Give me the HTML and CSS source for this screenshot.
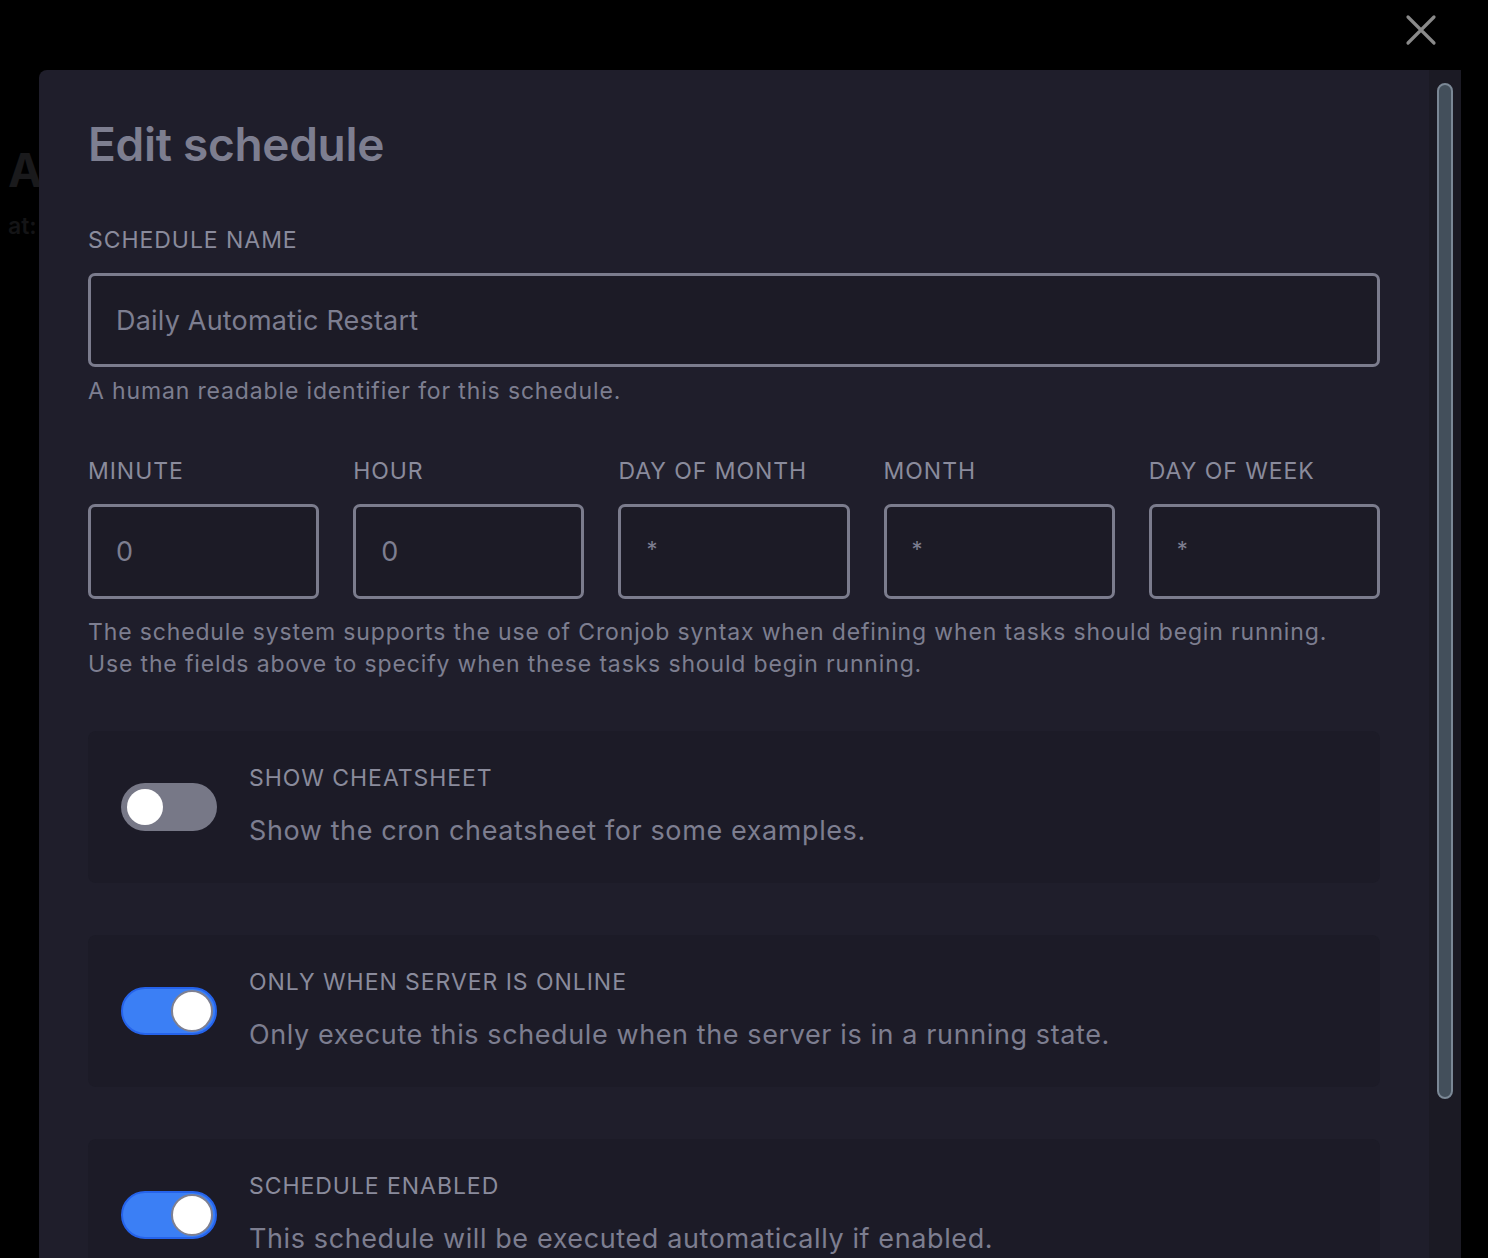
FILE: index.html
```html
<!DOCTYPE html>
<html>
<head>
<meta charset="utf-8">
<link rel="stylesheet" href="styles.css">
</head>
<body>
<div class="page">
  <div class="page-title">A</div>
  <div class="page-sub">at:</div>
</div>

<button class="close" aria-label="Close">
  <svg width="32" height="32" viewBox="0 0 32 32"><path d="M3 3 L29 29 M29 3 L3 29" stroke="#8a8a8a" stroke-width="3.2" stroke-linecap="round"/></svg>
</button>

<div class="modal">
  <div class="modal-body">
    <h1 class="title">Edit schedule</h1>

    <label class="label">Schedule name</label>
    <div class="input wide">Daily Automatic Restart</div>
    <p class="help">A human readable identifier for this schedule.</p>

    <div class="cron">
      <div class="cron-field"><label class="label">Minute</label><div class="input">0</div></div>
      <div class="cron-field"><label class="label">Hour</label><div class="input">0</div></div>
      <div class="cron-field"><label class="label">Day of month</label><div class="input star">*</div></div>
      <div class="cron-field"><label class="label">Month</label><div class="input star">*</div></div>
      <div class="cron-field"><label class="label">Day of week</label><div class="input star">*</div></div>
    </div>
    <p class="help cron-help">The schedule system supports the use of Cronjob syntax when defining when tasks should begin running.<br>Use the fields above to specify when these tasks should begin running.</p>

    <div class="card">
      <span class="toggle"><span class="knob"></span></span>
      <div class="card-text">
        <div class="card-label">Show cheatsheet</div>
        <div class="card-desc">Show the cron cheatsheet for some examples.</div>
      </div>
    </div>

    <div class="card">
      <span class="toggle on"><span class="knob"></span></span>
      <div class="card-text">
        <div class="card-label">Only when server is online</div>
        <div class="card-desc">Only execute this schedule when the server is in a running state.</div>
      </div>
    </div>

    <div class="card">
      <span class="toggle on"><span class="knob"></span></span>
      <div class="card-text">
        <div class="card-label">Schedule enabled</div>
        <div class="card-desc">This schedule will be executed automatically if enabled.</div>
      </div>
    </div>
  </div>
  <div class="scrollbar"><div class="thumb"></div></div>
</div>
</body>
</html>
```

FILE: styles.css
```css
* { box-sizing: border-box; }
html, body { margin: 0; padding: 0; }
body {
  background: #000;
  width: 1488px;
  height: 1258px;
  overflow: hidden;
  font-family: Inter, "Noto Sans", sans-serif;
  position: relative;
}
.page { padding: 142px 0 0 8px; }
.page-title { font-size: 46px; font-weight: 700; color: #1a1a1c; line-height: 56px; }
.page-sub { font-size: 23px; font-weight: 600; color: #141416; margin-top: 14px; }

.close {
  position: absolute;
  left: 1405px;
  top: 14px;
  width: 32px;
  height: 32px;
  padding: 0;
  border: 0;
  background: none;
}

.modal {
  position: absolute;
  left: 39px;
  top: 70px;
  width: 1422px;
  height: 1240px;
  background: #1f1e2b;
  border-radius: 8px 8px 0 0;
  display: flex;
}
.modal-body {
  flex: 1;
  padding: 44px 49px 0 49px;
}
.title {
  margin: 0;
  font-size: 46px;
  font-weight: 600;
  letter-spacing: -0.3px;
  color: #7d7e90;
  line-height: 60px;
}
.label {
  display: block;
  font-size: 23px;
  color: #8a8b9c;
  text-transform: uppercase;
  letter-spacing: 0.95px;
  line-height: 28px;
}
.title + .label { margin-top: 52px; }
.input {
  margin-top: 19px;
  height: 94px;
  border: 3px solid #7b7c8d;
  border-radius: 7px;
  background: #1c1b26;
  color: #7d7e90;
  font-size: 27px;
  letter-spacing: 0.2px;
  padding-left: 25px;
  display: flex;
  align-items: center;
}
.help {
  margin: 8px 0 0;
  font-size: 23px;
  line-height: 32px;
  letter-spacing: 0.85px;
  color: #7d7e90;
}
.cron {
  display: flex;
  gap: 34px;
  margin-top: 50px;
}
.cron-field { flex: 1; }
.cron-field .input { height: 95px; }
.input.star { font-size: 22px; padding-bottom: 6px; }
.cron-help { margin-top: 17px; }

.card {
  margin-top: 52px;
  height: 152px;
  background: #1c1b27;
  border-radius: 8px;
  display: flex;
  align-items: center;
  padding-left: 33px;
  gap: 32px;
}
.cron-help + .card { margin-top: 51px; }
.toggle {
  width: 96px;
  height: 48px;
  border-radius: 24px;
  background: #777887;
  position: relative;
  flex: none;
}
.toggle .knob {
  position: absolute;
  left: 6px;
  top: 6px;
  width: 36px;
  height: 36px;
  border-radius: 50%;
  background: #fff;
}
.toggle.on {
  background: #3b7ff5;
  border: 2px solid #2563eb;
}
.toggle.on .knob {
  left: 48px;
  top: 1px;
  width: 42px;
  height: 42px;
  border: 2px solid #7f8090;
}
.card-text { padding-bottom: 4px; }
.card-label {
  font-size: 23px;
  color: #8a8b9c;
  text-transform: uppercase;
  letter-spacing: 0.95px;
  line-height: 28px;
}
.card-desc {
  margin-top: 23px;
  font-size: 27px;
  color: #7d7e90;
  letter-spacing: 0.6px;
  line-height: 32px;
}

.scrollbar {
  width: 32px;
  background: #1b1a24;
  padding: 13px 8px 0;
}
.thumb {
  height: 1016px;
  background: #434f5b;
  border: 2px solid #7b8896;
  border-radius: 8px;
}
```
